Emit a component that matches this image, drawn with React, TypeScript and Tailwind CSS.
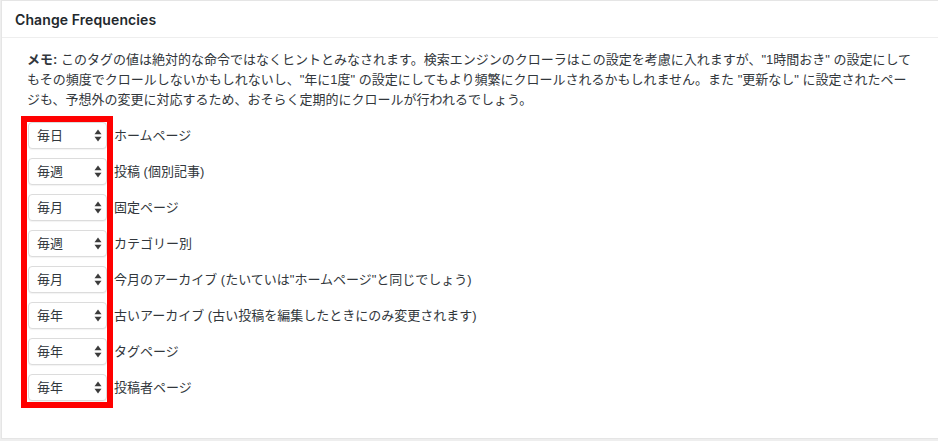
const rows = [
  { value: '毎日', label: 'ホームページ' },
  { value: '毎週', label: '投稿 (個別記事)' },
  { value: '毎月', label: '固定ページ' },
  { value: '毎週', label: 'カテゴリー別' },
  { value: '毎月', label: '今月のアーカイブ (たいていは"ホームページ"と同じでしょう)' },
  { value: '毎年', label: '古いアーカイブ (古い投稿を編集したときにのみ変更されます)' },
  { value: '毎年', label: 'タグページ' },
  { value: '毎年', label: '投稿者ページ' },
];

const font = { fontFamily: '"Liberation Sans", "Noto Sans CJK JP", sans-serif' };

function Arrows() {
  return (
    <svg width="8" height="13" viewBox="0 0 8 13" className="text-[#3c3c3c]">
      <path d="M4 0.5 L7.5 5.3 L0.5 5.3 Z" fill="currentColor" />
      <path d="M4 12.5 L7.5 7.7 L0.5 7.7 Z" fill="currentColor" />
    </svg>
  );
}

function FakeSelect({ value }: { value: string }) {
  return (
    <div className="h-[27px] w-[79px] flex items-center justify-between pl-[8px] pr-[4px] bg-white border border-[#dcdcdc] rounded-[4px] shadow-[0_1px_1px_rgba(0,0,0,0.05)] text-[13px] text-[#32373c]">
      <span>{value}</span>
      <Arrows />
    </div>
  );
}

export default function App() {
  return (
    <div className="w-[938px] h-[441px] overflow-hidden bg-[#eeeeee] pl-px" style={font}>
      <div className="w-[960px] h-[439px] bg-white border-t border-b border-l border-[#e5e5e5]">
        {/* Header */}
        <div className="h-[37px] border-b border-[#eeeeee] flex items-center pl-[13px] pt-px">
          <h2 className="text-[14px] font-semibold text-[#23282d] font-['Inter',sans-serif] tracking-[0.1px]">
            Change Frequencies
          </h2>
        </div>

        {/* Body */}
        <div className="pt-[12px] pl-[19px]">
          <p className="pl-[6px] text-[13px] leading-[20px] text-[#32373c]">
            <span className="block whitespace-nowrap">
              <b>メモ:</b> このタグの値は絶対的な命令ではなくヒントとみなされます。検索エンジンのクローラはこの設定を考慮に入れますが、"1時間おき" の設定にして
            </span>
            <span className="block whitespace-nowrap">
              もその頻度でクロールしないかもしれないし、"年に1度" の設定にしてもより頻繁にクロールされるかもしれません。また "更新なし" に設定されたペー
            </span>
            <span className="block whitespace-nowrap">
              ジも、予想外の変更に対応するため、おそらく定期的にクロールが行われるでしょう。
            </span>
          </p>

          <div className="mt-[6px] flex">
            <div className="border-[6px] border-[#ff0000] pl-px pb-px flex flex-col gap-[9px]">
              {rows.map((r, i) => (
                <FakeSelect key={i} value={r.value} />
              ))}
            </div>
            <div className="pt-[6px] pl-px flex flex-col gap-[9px]">
              {rows.map((r, i) => (
                <div key={i} className="h-[27px] flex items-center text-[13px] text-[#32373c] whitespace-nowrap">
                  {r.label}
                </div>
              ))}
            </div>
          </div>
        </div>
      </div>
    </div>
  );
}
